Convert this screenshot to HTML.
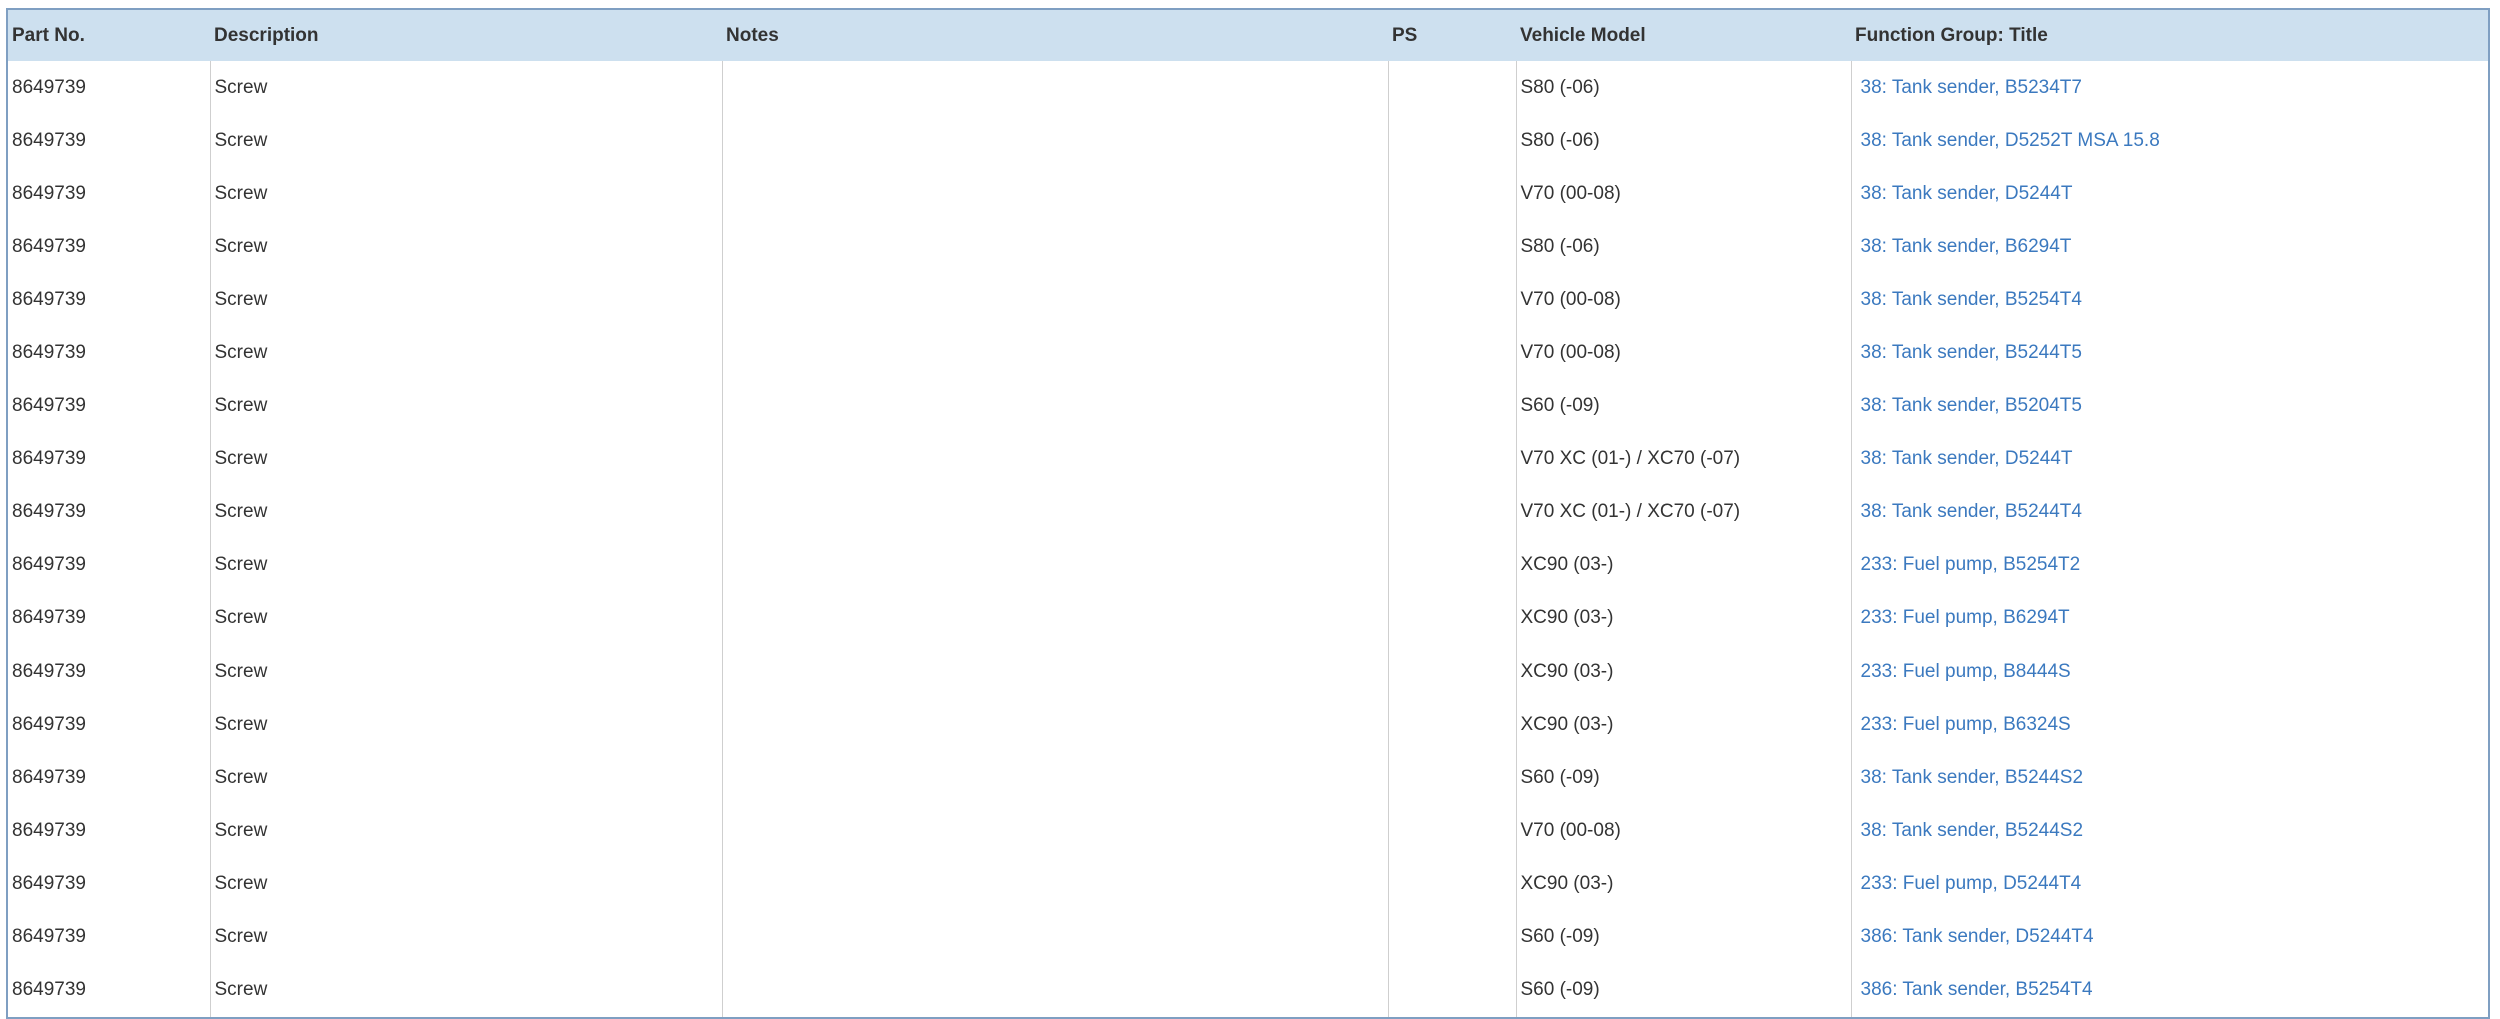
<!DOCTYPE html>
<html><head><meta charset="utf-8"><style>
html,body{margin:0;padding:0;background:#fff;width:2500px;height:1018px;overflow:hidden}
table{position:absolute;left:6px;top:8px;width:2484px;border-collapse:collapse;border:2px solid #7f9fc2;font-family:"Liberation Sans",Arial,sans-serif;font-size:19px;color:#333;table-layout:fixed}
th{background:#cde0ef;height:51px;text-align:left;font-weight:bold;padding:0 0 0 4px;color:#333;border:none}
td{height:53.1px;padding:0 0 0 4px;border-left:1px solid #cfcfcf;vertical-align:middle}
td:first-child{border-left:none}
td a{color:#3b79bf;text-decoration:none;padding-left:5px}
</style></head><body>
<table>
<colgroup><col style="width:203px"><col style="width:512px"><col style="width:666px"><col style="width:128px"><col style="width:335px"><col></colgroup>
<tr><th>Part No.</th><th>Description</th><th>Notes</th><th>PS</th><th>Vehicle Model</th><th>Function Group: Title</th></tr>
<tr><td>8649739</td><td>Screw</td><td></td><td></td><td>S80 (-06)</td><td><a>38: Tank sender, B5234T7</a></td></tr>
<tr><td>8649739</td><td>Screw</td><td></td><td></td><td>S80 (-06)</td><td><a>38: Tank sender, D5252T MSA 15.8</a></td></tr>
<tr><td>8649739</td><td>Screw</td><td></td><td></td><td>V70 (00-08)</td><td><a>38: Tank sender, D5244T</a></td></tr>
<tr><td>8649739</td><td>Screw</td><td></td><td></td><td>S80 (-06)</td><td><a>38: Tank sender, B6294T</a></td></tr>
<tr><td>8649739</td><td>Screw</td><td></td><td></td><td>V70 (00-08)</td><td><a>38: Tank sender, B5254T4</a></td></tr>
<tr><td>8649739</td><td>Screw</td><td></td><td></td><td>V70 (00-08)</td><td><a>38: Tank sender, B5244T5</a></td></tr>
<tr><td>8649739</td><td>Screw</td><td></td><td></td><td>S60 (-09)</td><td><a>38: Tank sender, B5204T5</a></td></tr>
<tr><td>8649739</td><td>Screw</td><td></td><td></td><td>V70 XC (01-) / XC70 (-07)</td><td><a>38: Tank sender, D5244T</a></td></tr>
<tr><td>8649739</td><td>Screw</td><td></td><td></td><td>V70 XC (01-) / XC70 (-07)</td><td><a>38: Tank sender, B5244T4</a></td></tr>
<tr><td>8649739</td><td>Screw</td><td></td><td></td><td>XC90 (03-)</td><td><a>233: Fuel pump, B5254T2</a></td></tr>
<tr><td>8649739</td><td>Screw</td><td></td><td></td><td>XC90 (03-)</td><td><a>233: Fuel pump, B6294T</a></td></tr>
<tr><td>8649739</td><td>Screw</td><td></td><td></td><td>XC90 (03-)</td><td><a>233: Fuel pump, B8444S</a></td></tr>
<tr><td>8649739</td><td>Screw</td><td></td><td></td><td>XC90 (03-)</td><td><a>233: Fuel pump, B6324S</a></td></tr>
<tr><td>8649739</td><td>Screw</td><td></td><td></td><td>S60 (-09)</td><td><a>38: Tank sender, B5244S2</a></td></tr>
<tr><td>8649739</td><td>Screw</td><td></td><td></td><td>V70 (00-08)</td><td><a>38: Tank sender, B5244S2</a></td></tr>
<tr><td>8649739</td><td>Screw</td><td></td><td></td><td>XC90 (03-)</td><td><a>233: Fuel pump, D5244T4</a></td></tr>
<tr><td>8649739</td><td>Screw</td><td></td><td></td><td>S60 (-09)</td><td><a>386: Tank sender, D5244T4</a></td></tr>
<tr><td>8649739</td><td>Screw</td><td></td><td></td><td>S60 (-09)</td><td><a>386: Tank sender, B5254T4</a></td></tr>
</table>
</body></html>
